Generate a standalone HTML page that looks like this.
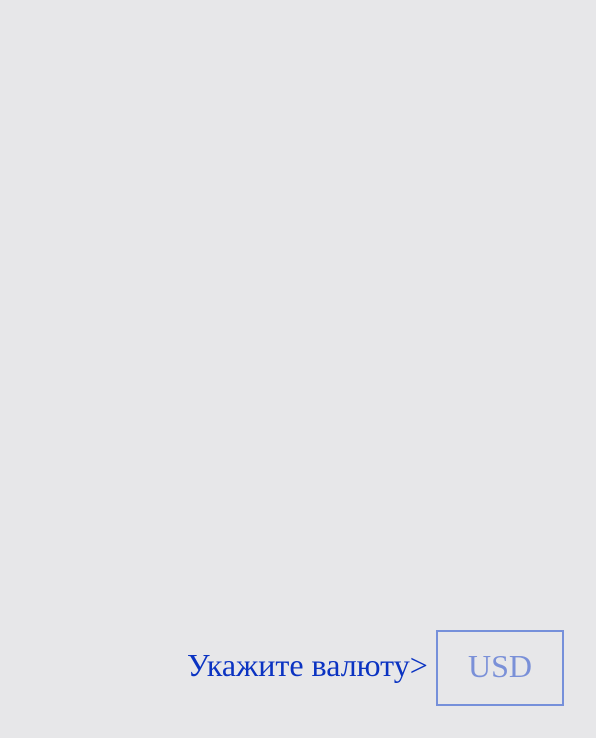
<!DOCTYPE html>
<html><head><style>
html,body{margin:0;padding:0;}
body{width:596px;height:738px;background:#e7e7e9;position:relative;overflow:hidden;font-family:"Liberation Serif",serif;}
.lbl{position:absolute;left:187px;top:645px;font-size:32px;line-height:40px;color:#0b33c2;white-space:nowrap;}
.box{position:absolute;left:436px;top:630px;width:124px;height:72px;border:2px solid #7690da;box-sizing:content-box;}
.usd{position:absolute;left:0;right:0;top:14px;text-align:center;font-size:32px;line-height:40px;color:#7a90d8;}
</style></head><body>
<div class="lbl">Укажите валюту&gt;</div>
<div class="box"><div class="usd">USD</div></div>
</body></html>
